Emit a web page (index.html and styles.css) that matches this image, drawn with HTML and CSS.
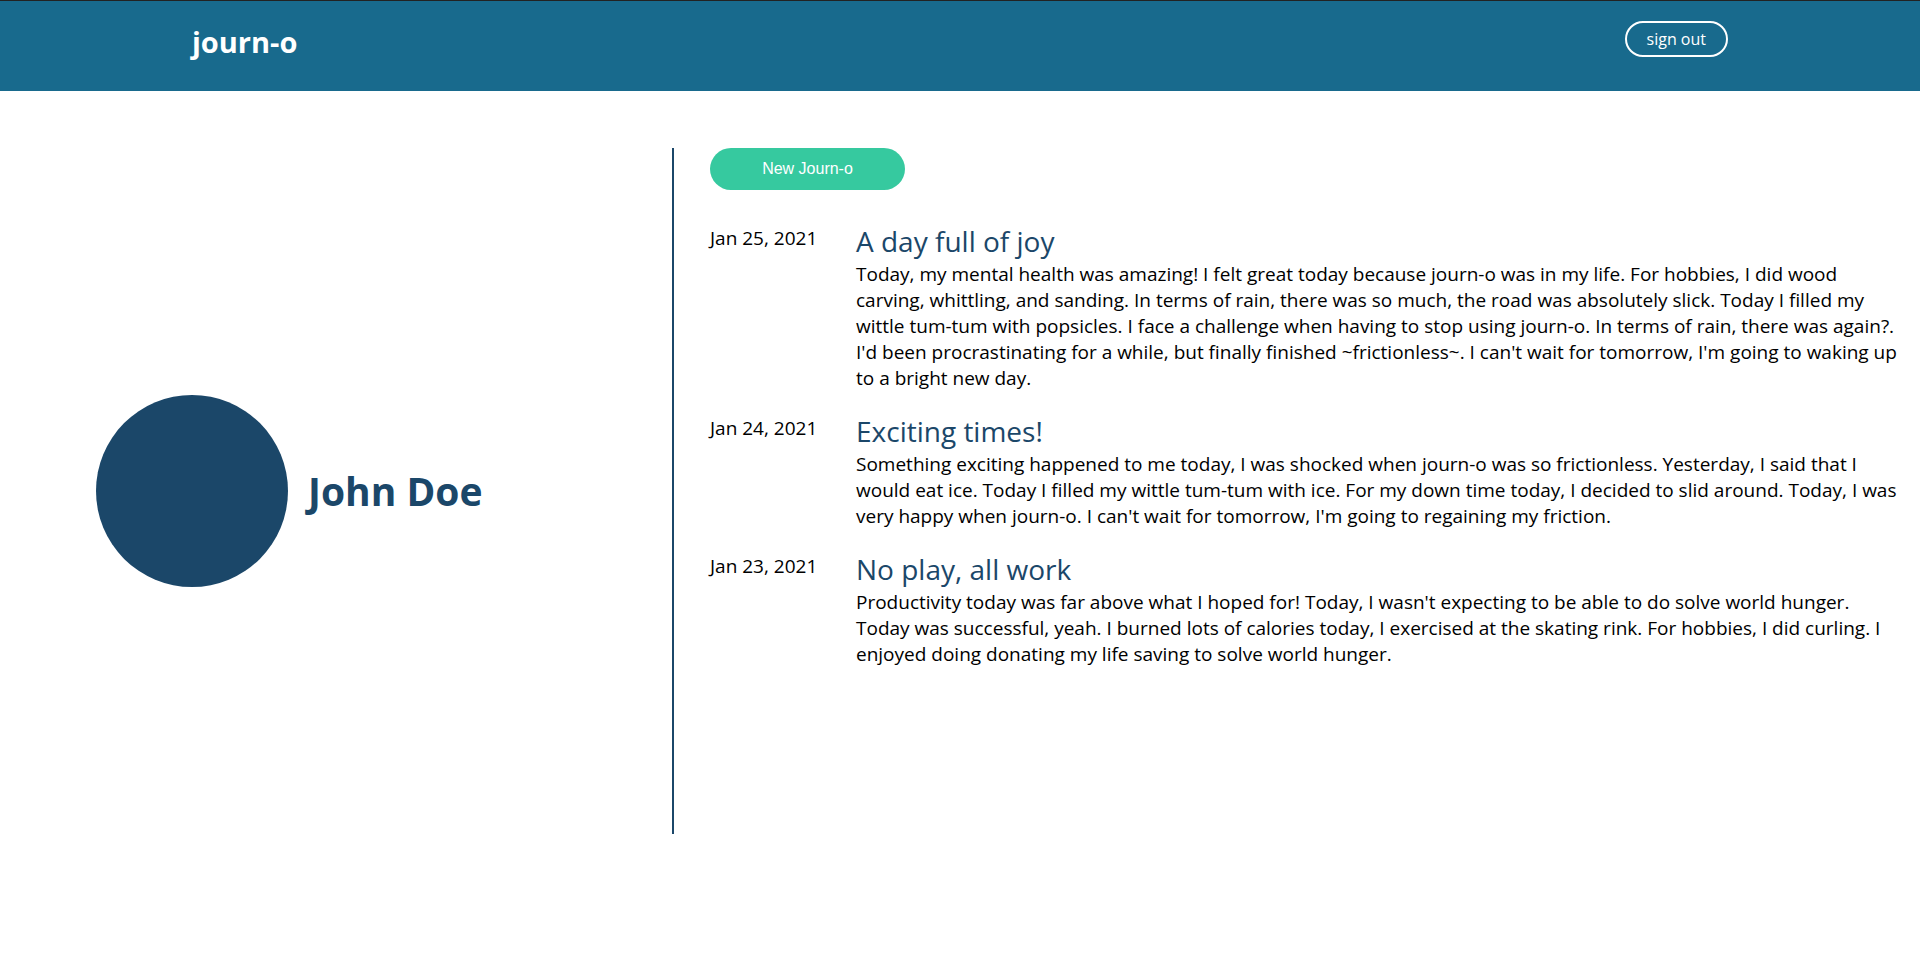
FILE: index.html
```html
<!DOCTYPE html>
<html lang="en">
<head>
<meta charset="utf-8">
<meta name="viewport" content="width=device-width, initial-scale=1">
<title>journ-o</title>
<link rel="stylesheet" href="styles.css">
</head>
<body>
<header class="topbar">
  <a class="brand" href="#">journ-o</a>
  <button class="sign-out" type="button">sign out</button>
</header>
<main class="page">
  <section class="profile">
    <div class="avatar"></div>
    <h1 class="name">John Doe</h1>
  </section>
  <section class="journal">
    <button class="new-entry" type="button">New Journ-o</button>
    <div class="entries">
      <article class="entry">
        <time class="date" datetime="2021-01-25">Jan 25, 2021</time>
        <div class="content">
          <h2 class="title">A day full of joy</h2>
          <p class="text">Today, my mental health was amazing! I felt great today because journ-o was in my life. For hobbies, I did wood carving, whittling, and sanding. In terms of rain, there was so much, the road was absolutely slick. Today I filled my wittle tum-tum with popsicles. I face a challenge when having to stop using journ-o. In terms of rain, there was again?. I'd been procrastinating for a while, but finally finished ~frictionless~. I can't wait for tomorrow, I'm going to waking up to a bright new day.</p>
        </div>
      </article>
      <article class="entry">
        <time class="date" datetime="2021-01-24">Jan 24, 2021</time>
        <div class="content">
          <h2 class="title">Exciting times!</h2>
          <p class="text">Something exciting happened to me today, I was shocked when journ-o was so frictionless. Yesterday, I said that I would eat ice. Today I filled my wittle tum-tum with ice. For my down time today, I decided to slid around. Today, I was very happy when journ-o. I can't wait for tomorrow, I'm going to regaining my friction.</p>
        </div>
      </article>
      <article class="entry">
        <time class="date" datetime="2021-01-23">Jan 23, 2021</time>
        <div class="content">
          <h2 class="title">No play, all work</h2>
          <p class="text">Productivity today was far above what I hoped for! Today, I wasn't expecting to be able to do solve world hunger. Today was successful, yeah. I burned lots of calories today, I exercised at the skating rink. For hobbies, I did curling. I enjoyed doing donating my life saving to solve world hunger.</p>
        </div>
      </article>
    </div>
  </section>
</main>
</body>
</html>
```
FILE: styles.css
```css
* {
  box-sizing: border-box;
}

body {
  margin: 0;
  background: #fff;
  color: #000;
  font-family: "Segoe UI", "Open Sans", "Noto Sans", sans-serif;
  font-size: 19px;
  line-height: 26px;
}

.topbar {
  display: flex;
  justify-content: space-between;
  align-items: flex-start;
  padding: 20px 10% 28px;
  border-top: 1px solid #222;
  background: #186a8d;
}

.brand {
  color: #fff;
  font-size: 29px;
  font-weight: 700;
  line-height: 42px;
  text-decoration: none;
}

.sign-out {
  padding: 0 20px;
  border: 2px solid #fff;
  border-radius: 18px;
  background: transparent;
  color: #fff;
  font-family: inherit;
  font-size: 16px;
  line-height: 32px;
}

.page {
  display: flex;
  min-height: 70vh;
  margin-top: 57px;
}

.profile {
  display: flex;
  align-items: center;
  gap: 20px;
  width: 35%;
  padding-left: 5%;
}

.avatar {
  width: 10vw;
  aspect-ratio: 1;
  border-radius: 50%;
  background: #1b4769;
}

.name {
  margin: 0;
  color: #1b4769;
  font-size: 39px;
  font-weight: 700;
  line-height: 52px;
}

.journal {
  flex: 1;
  padding: 0 14px 0 36px;
  border-left: 2px solid #1b4769;
}

.new-entry {
  display: block;
  width: 195px;
  padding: 0;
  border: 0;
  border-radius: 21px;
  background: #36c99f;
  color: #fff;
  font-family: "Liberation Sans", Arial, sans-serif;
  font-size: 16px;
  line-height: 42px;
}

.entries {
  display: grid;
  gap: 24px;
  margin-top: 35px;
}

.entry {
  display: grid;
  grid-template-columns: 106px 1fr;
  column-gap: 40px;
}

.date {
  white-space: nowrap;
}

.title {
  margin: 0;
  padding-bottom: 4px;
  color: #1b4769;
  font-size: 28px;
  font-weight: 400;
  line-height: 32px;
}

.text {
  margin: 0;
}
```
